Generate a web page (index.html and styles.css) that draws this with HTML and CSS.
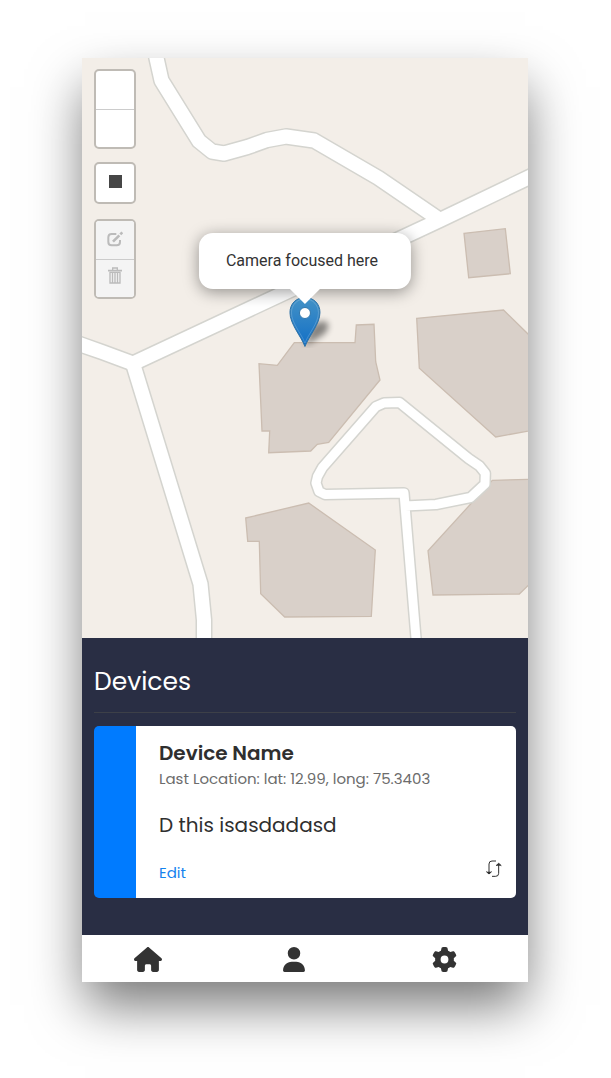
FILE: index.html
```html
<!DOCTYPE html>
<html lang="en">
<head>
<meta charset="utf-8">
<meta name="viewport" content="width=device-width, initial-scale=1">
<title>Devices</title>
<link rel="stylesheet" href="styles.css">
</head>
<body>
<div class="phone">
  <section class="map" aria-label="Map">
    <svg class="map-tiles" viewBox="82 58 446 580" preserveAspectRatio="xMidYMid slice" aria-hidden="true">
      <g class="buildings">
        <path d="M294.3 342.7L355 342.7L356.3 325L374 324.3L375.7 361.7L380 380L328.7 442.3L317.3 444.3L310.7 451L268.7 452.7L269.7 431L262 431L259 363.7L277.3 365.3Z"/>
        <path d="M416.7 318.3L503.5 310L528 334L545 350L545 428L495.7 437L419.3 368.3Z"/>
        <path d="M245.7 518L308.7 503L375.3 550L371.3 616.3L284.7 617L260.7 593.7L259.3 541.3L247.7 541.3Z"/>
        <path d="M492.3 480.3L545 479L545 569L519.3 594L433 595L428 550.7Z"/>
        <path d="M464 233.3L505.3 228.7L510.3 273.7L468.7 277.7Z"/>
      </g>
      <defs>
        <g id="roads">
          <path d="M70 341L82 345L102 352L133 363.5L440 220L540 172"/>
          <path d="M154 46L156.5 58L161.5 80.5L199 141L212 151.500L224 153.500L247.500 147L267 140L286 136.500L314 140.500L378.500 178L440 220"/>
          <path d="M133 363.500L200.500 584L204 620L204 650"/>
        </g>
        <g id="lanes">
          <path d="M417 650L404 493L325 494.500L319 491.500L316 483L317.500 476.500L322.500 467.500L375.700 406.700L384 403L399.500 402.500L468.500 458.500L479.500 466L485.300 473.300L485 484L470.500 497.500L436 504.500L405 506"/>
        </g>
      </defs>
      <use href="#roads" class="road casing"/>
      <use href="#lanes" class="lane casing"/>
      <use href="#roads" class="road fill"/>
      <use href="#lanes" class="lane fill"/>
    </svg>

    <div class="controls">
      <div class="control">
        <button type="button" aria-label="Zoom in"></button>
        <button type="button" aria-label="Zoom out"></button>
      </div>
      <div class="control">
        <button type="button" aria-label="Draw a rectangle"><span class="square"></span></button>
      </div>
      <div class="control control-edit">
        <button type="button" aria-label="Edit layers" disabled>
          <svg width="16" height="16" viewBox="0 0 48 48" fill="none" stroke="currentColor" stroke-width="6">
            <path d="M28 9H14Q4 9 4 19V33Q4 43 14 43H29Q39 43 39 33V27"/>
            <path d="M18 32L37 13" stroke-width="8"/>
            <path d="M40 10L46 4" stroke-width="8"/>
          </svg>
        </button>
        <button type="button" class="trash" aria-label="Delete layers" disabled>
          <svg width="14" height="17" viewBox="0 0 42 51" fill="none" stroke="currentColor" stroke-width="4">
            <path d="M0 11H42" stroke-width="5"/>
            <path d="M14 10V3H28V10"/>
            <path d="M6 16V48H36V16ZM13.500 17V47M21 17V47M28.500 17V47"/>
          </svg>
        </button>
      </div>
    </div>

    <div class="marker">
      <div class="popup">Camera focused here</div>
      <svg class="pin" width="62" height="52" viewBox="0 0 62 52" aria-hidden="true">
        <defs>
          <linearGradient id="pin-fill" x1="0" y1="0" x2="0" y2="1">
            <stop offset="0" stop-color="#4492c6"/>
            <stop offset="1" stop-color="#126fc6"/>
          </linearGradient>
          <filter id="soft" x="-50%" y="-50%" width="200%" height="200%"><feGaussianBlur stdDeviation="3"/></filter>
        </defs>
        <path d="M31 50L37 32Q44 23 53 26Q57 32 49 39Z" fill="#000" opacity=".45" filter="url(#soft)"/>
        <path d="M31 50.500C27 40 16 28 16 16.500C16 8 22 1.500 31 1.500S46 8 46 16.500C46 28 35 40 31 50.500Z" fill="url(#pin-fill)" stroke="#2e72a6"/>
        <path d="M31 47C27 37 17.500 27 17.500 16.500C17.500 9 23 3 31 3S44.500 9 44.500 16.500C44.500 27 35 37 31 47Z" fill="none" stroke="#fff" opacity=".18"/>
        <circle cx="31" cy="17" r="5.500" fill="#fff" stroke="#2f76ac"/>
      </svg>
      <span class="popup-tip"></span>
    </div>
  </section>

  <main class="panel">
    <h1>Devices</h1>
    <article class="card">
      <div class="card-body">
        <h2>Device Name</h2>
        <p class="location">Last Location: lat: 12.99, long: 75.3403</p>
        <p class="description">D this isasdadasd</p>
        <div class="card-actions">
          <a href="#edit">Edit</a>
          <button type="button" aria-label="Refresh location">
            <svg width="16" height="17" viewBox="0 0 48 51" fill="none" stroke="currentColor" stroke-width="3">
              <path d="M30 3H18Q9 3 9 12V38"/>
              <path d="M18 49H29Q38 49 38 40V14"/>
              <path d="M1 35L9 42L17 35" fill="currentColor"/>
              <path d="M30 17L38 10L46 17" fill="currentColor"/>
            </svg>
          </button>
        </div>
      </div>
    </article>
  </main>

  <nav class="tabs" aria-label="Main">
    <a href="#home" aria-label="Home"><svg width="28" height="25" viewBox="0 0 576 512"><path d="M575.800 255.500c0 18-15 32.100-32 32.100h-32l.7 160.200c0 2.700-.2 5.400-.5 8.100V472c0 22.100-17.900 40-40 40H392c-22.100 0-40-17.900-40-40V384c0-17.700-14.300-32-32-32H256c-17.700 0-32 14.300-32 32v88c0 22.100-17.900 40-40 40H104c-22.100 0-40-17.900-40-40V287.600H32c-18 0-32-14-32-32.100c0-9 3-17 10-24L266.400 8c7-7 15-8 22-8s15 2 21 7L564.800 231.500c8 7 12 15 11 24z"/></svg></a>
    <a href="#profile" aria-label="Profile"><svg width="22" height="25" viewBox="0 0 448 512"><path d="M224 256A128 128 0 1 0 224 0a128 128 0 1 0 0 256zm-45.700 48C79.800 304 0 383.800 0 482.300C0 498.700 13.300 512 29.700 512H418.300c16.400 0 29.700-13.300 29.700-29.700C448 383.800 368.200 304 269.700 304H178.300z"/></svg></a>
    <a href="#settings" aria-label="Settings"><svg width="25" height="25" viewBox="0 0 512 512"><path d="M495.900 166.600c3.200 8.700 .5 18.400-6.400 24.600l-43.300 39.400c1.100 8.300 1.700 16.800 1.700 25.400s-.6 17.100-1.700 25.400l43.300 39.400c6.900 6.200 9.600 15.900 6.400 24.600c-4.400 11.900-9.700 23.300-15.800 34.300l-4.700 8.100c-6.600 11-14 21.400-22.100 31.200c-5.900 7.200-15.700 9.600-24.500 6.800l-55.700-17.700c-13.400 10.300-28.200 18.900-44 25.400l-12.500 57.100c-2 9.100-9 16.300-18.200 17.800c-13.800 2.300-28 3.500-42.500 3.500s-28.700-1.200-42.500-3.500c-9.200-1.500-16.200-8.700-18.200-17.800l-12.500-57.100c-15.800-6.500-30.600-15.100-44-25.400L83.100 425.900c-8.800 2.800-18.600 .3-24.500-6.800c-8.100-9.800-15.500-20.200-22.100-31.200l-4.700-8.100c-6.100-11-11.400-22.400-15.800-34.300c-3.200-8.700-.5-18.400 6.400-24.600l43.300-39.400C64.600 273.100 64 264.600 64 256s.6-17.100 1.700-25.400L22.400 191.200c-6.900-6.200-9.600-15.900-6.400-24.600c4.400-11.900 9.700-23.300 15.800-34.300l4.700-8.100c6.600-11 14-21.400 22.100-31.200c5.900-7.200 15.700-9.600 24.500-6.800l55.700 17.700c13.400-10.300 28.200-18.900 44-25.400l12.500-57.100c2-9.100 9-16.300 18.200-17.800C227.300 1.200 241.500 0 256 0s28.700 1.200 42.500 3.500c9.200 1.500 16.200 8.700 18.200 17.800l12.500 57.100c15.800 6.500 30.600 15.100 44 25.400l55.700-17.700c8.800-2.800 18.600-.3 24.500 6.800c8.100 9.800 15.500 20.200 22.100 31.200l4.700 8.100c6.100 11 11.400 22.400 15.800 34.300zM256 336a80 80 0 1 0 0-160 80 80 0 1 0 0 160z"/></svg></a>
  </nav>
</div>
</body>
</html>
```
FILE: styles.css
```css
* { box-sizing: border-box; }

body {
  margin: 0;
  padding: 58px 83px 96px 82px;
  min-height: 100vh;
  display: flex;
  background: #fff;
  color: #2f2f2f;
  font-family: Poppins, Inter, sans-serif;
}

h1, h2, p { margin: 0; }

button {
  border: 0;
  padding: 0;
  background: none;
  color: inherit;
}

svg { display: block; }

.phone {
  flex: 1;
  min-width: 0;
  display: flex;
  flex-direction: column;
  box-shadow: 0 26px 50px -3px rgba(0, 0, 0, .54);
}

/* Map */
.map {
  position: relative;
  flex: 1 0 auto;
  min-height: 400px;
  padding: 11px 12px;
  overflow: hidden;
  background: #f3eee8;
}

.map-tiles {
  position: absolute;
  inset: 0;
  width: 100%;
  height: 100%;
}

.buildings { fill: #d9d0c9; stroke: #cbbdb1; stroke-width: 1.3; }

.road, .lane { fill: none; stroke-linejoin: round; }
.casing { stroke: #d4d4cf; }
.fill { stroke: #fff; }
.road.casing { stroke-width: 17; }
.road.fill { stroke-width: 14; }
.lane.casing { stroke-width: 12; }
.lane.fill { stroke-width: 9; }

.controls {
  position: relative;
  display: flex;
  flex-direction: column;
  align-items: flex-start;
  gap: 13px;
}

.control {
  width: 42px;
  border: 2px solid #bfbbb5;
  border-radius: 5px;
  overflow: hidden;
  background: #fff;
}

.control-edit { margin-top: 2px; }

.control button {
  display: flex;
  align-items: center;
  justify-content: center;
  width: 100%;
  height: 38px;
  padding-bottom: 3px;
}

.control button + button { border-top: 1px solid #ccc; }
.control button:disabled { background: #f4f4f4; color: #bbb; }
.control .trash { padding-bottom: 7px; }
.square { width: 13px; height: 13px; background: #464646; }

.marker {
  position: absolute;
  left: 50%;
  top: 175px;
  transform: translateX(-50%);
  display: flex;
  flex-direction: column;
  align-items: center;
}

.popup {
  padding: 16px 33px 16px 27px;
  border-radius: 14px;
  background: #fff;
  box-shadow: 0 3px 16px rgba(0, 0, 0, .4);
  color: #333;
  font: 16px/24px Roboto, sans-serif;
  white-space: nowrap;
}

.pin { margin-top: 7px; }

.popup-tip {
  position: absolute;
  top: 56px;
  border: 15px solid transparent;
  border-top-color: #fff;
  border-bottom: 0;
}

/* Device list */
.panel {
  padding: 25px 12px 37px;
  background: #292e44;
}

h1 {
  padding-bottom: 11px;
  border-bottom: 1px solid #3d4048;
  color: #fff;
  font-size: 25px;
  line-height: 38px;
  font-weight: 400;
}

.card {
  margin-top: 13px;
  border-left: 42px solid #007bff;
  border-radius: 5px;
  background: #fff;
}

.card-body { padding: 14px 14px 12px 23px; }

h2 {
  font-size: 20px;
  line-height: 26px;
  font-weight: 600;
}

.location {
  color: #6c6c6c;
  font-size: 15px;
  line-height: 26px;
}

.description {
  margin-top: 18px;
  font-size: 20px;
  line-height: 30px;
}

.card-actions {
  display: flex;
  justify-content: space-between;
  margin-top: 20px;
  font-size: 15px;
  line-height: 26px;
}

.card-actions a { color: #1482ee; text-decoration: none; }
.card-actions button { align-self: flex-start; }

/* Bottom navigation */
.tabs {
  display: grid;
  grid-template-columns: 132fr 160fr 140fr;
  padding: 12px 14px 10px 0;
  background: #fff;
}

.tabs a { display: flex; justify-content: center; }
.tabs svg { fill: #333; }
```
